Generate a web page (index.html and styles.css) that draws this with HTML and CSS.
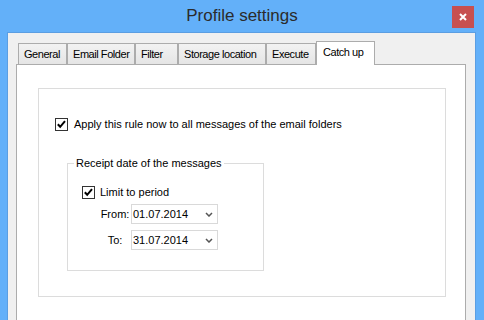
FILE: index.html
```html
<!DOCTYPE html>
<html lang="en">
<head>
  <meta charset="UTF-8">
  <title>Profile settings</title>
  <link rel="stylesheet" href="styles.css">
</head>
<body>
  <div class="window">
    <div class="titlebar">
      <span></span>
      <div class="title">Profile settings</div>
      <div class="close">
        <svg width="8" height="8" viewBox="0 0 8 8"><path d="M1 1 L7 7 M7 1 L1 7" stroke="#fff" stroke-width="2"/></svg>
      </div>
    </div>

    <div class="client">
      <div class="tabs">
        <div class="tab tab-general">General</div>
        <div class="tab tab-email">Email Folder</div>
        <div class="tab tab-filter">Filter</div>
        <div class="tab tab-storage">Storage location</div>
        <div class="tab tab-execute">Execute</div>
        <div class="tab tab-catchup active">Catch up</div>
      </div>

      <div class="panel">
        <div class="group">
          <div class="check-row">
            <span class="checkbox">
              <svg width="11" height="11" viewBox="0 0 11 11"><path d="M1.8 5.2 L4.2 7.8 L9 2.2" fill="none" stroke="#000" stroke-width="2"/></svg>
            </span>
            Apply this rule now to all messages of the email folders
          </div>

          <fieldset class="period">
            <legend>Receipt date of the messages</legend>
            <div class="check-row">
              <span class="checkbox">
                <svg width="11" height="11" viewBox="0 0 11 11"><path d="M1.8 5.2 L4.2 7.8 L9 2.2" fill="none" stroke="#000" stroke-width="2"/></svg>
              </span>
              Limit to period
            </div>
            <div class="dates">
              <span class="date-label">From:</span>
              <div class="combo">
                <span>01.07.2014</span>
                <svg width="8" height="5" viewBox="0 0 8 5"><polyline points="1,1 4,4 7,1" fill="none" stroke="#555" stroke-width="1.5"/></svg>
              </div>
              <span class="date-label">To:</span>
              <div class="combo">
                <span>31.07.2014</span>
                <svg width="8" height="5" viewBox="0 0 8 5"><polyline points="1,1 4,4 7,1" fill="none" stroke="#555" stroke-width="1.5"/></svg>
              </div>
            </div>
          </fieldset>
        </div>
      </div>
    </div>
  </div>
</body>
</html>
```

FILE: styles.css
```css
body {
  margin: 0;
  height: 320px;
  overflow: hidden;
  background: #63b0f9;
  font-family: "Liberation Sans", Arial, sans-serif;
  font-size: 11px;
  color: #000;
}

.window {
  display: flex;
  flex-direction: column;
  height: 320px;
}

.titlebar {
  display: grid;
  grid-template-columns: 1fr auto 1fr;
  height: 32px;
}

.title {
  font-size: 17px;
  line-height: 32px;
  color: #2b2b2b;
}

.close {
  justify-self: end;
  width: 22px;
  height: 22px;
  margin: 6px 10px 0 0;
  background: #c75050;
  display: flex;
  align-items: center;
  justify-content: center;
}

.client {
  flex: 1;
  margin: 0 8px 0 7px;
  border: 1px solid #5b9ee2;
  border-bottom: none;
  background: #f0f0f0;
  padding: 8px 9px 0 8px;
  display: flex;
  flex-direction: column;
}

/* Tabs */
.tabs {
  display: flex;
  align-items: flex-end;
  padding-left: 2px;
  height: 23px;
}

.tab {
  box-sizing: border-box;
  height: 21px;
  border: 1px solid #acacac;
  border-bottom: none;
  background: linear-gradient(#f2f2f2, #e5e5e5);
  padding: 3px 0 0 5px;
  line-height: 15px;
  letter-spacing: -0.45px;
  white-space: nowrap;
}

.tab.active {
  position: relative;
  z-index: 1;
  height: 24px;
  margin-bottom: -1px;
  background: #fff;
  padding-left: 6px;
}

.tab-general { width: 49px; }
.tab-email { width: 68px; }
.tab-filter { width: 43px; }
.tab-storage { width: 88px; }
.tab-execute { width: 50px; }
.tab-catchup { width: 59px; }

.panel {
  flex: 1;
  background: #fff;
  border: 1px solid #acacac;
  border-bottom: none;
  padding: 23px 19px 0 21px;
}

/* Group boxes */
.group {
  box-sizing: border-box;
  height: 209px;
  border: 1px solid #dcdcdc;
  padding: 29px 0 0 16px;
}

.check-row {
  display: flex;
  align-items: center;
  gap: 6px;
  height: 13px;
  line-height: 13px;
  white-space: nowrap;
}

.checkbox {
  box-sizing: border-box;
  width: 13px;
  height: 13px;
  border: 1px solid #333;
  background: #fff;
  display: flex;
}

.period {
  box-sizing: border-box;
  width: 197px;
  min-width: 0;
  margin: 26px 0 0 12px;
  border: 1px solid #dcdcdc;
  padding: 0 0 20px 6px;
}

.period legend {
  padding: 0 2px;
  line-height: 13px;
}

.period .check-row {
  margin: 16px 0 0 8px;
  gap: 5px;
}

.dates {
  display: grid;
  grid-template-columns: 30px 87px;
  column-gap: 1px;
  row-gap: 6px;
  align-items: center;
  margin: 5px 0 0 26px;
}

.date-label {
  text-align: center;
}

.combo {
  box-sizing: border-box;
  height: 20px;
  border: 1px solid #d9d9d9;
  display: flex;
  align-items: center;
  justify-content: space-between;
  padding: 0 4px 0 1px;
}
```
